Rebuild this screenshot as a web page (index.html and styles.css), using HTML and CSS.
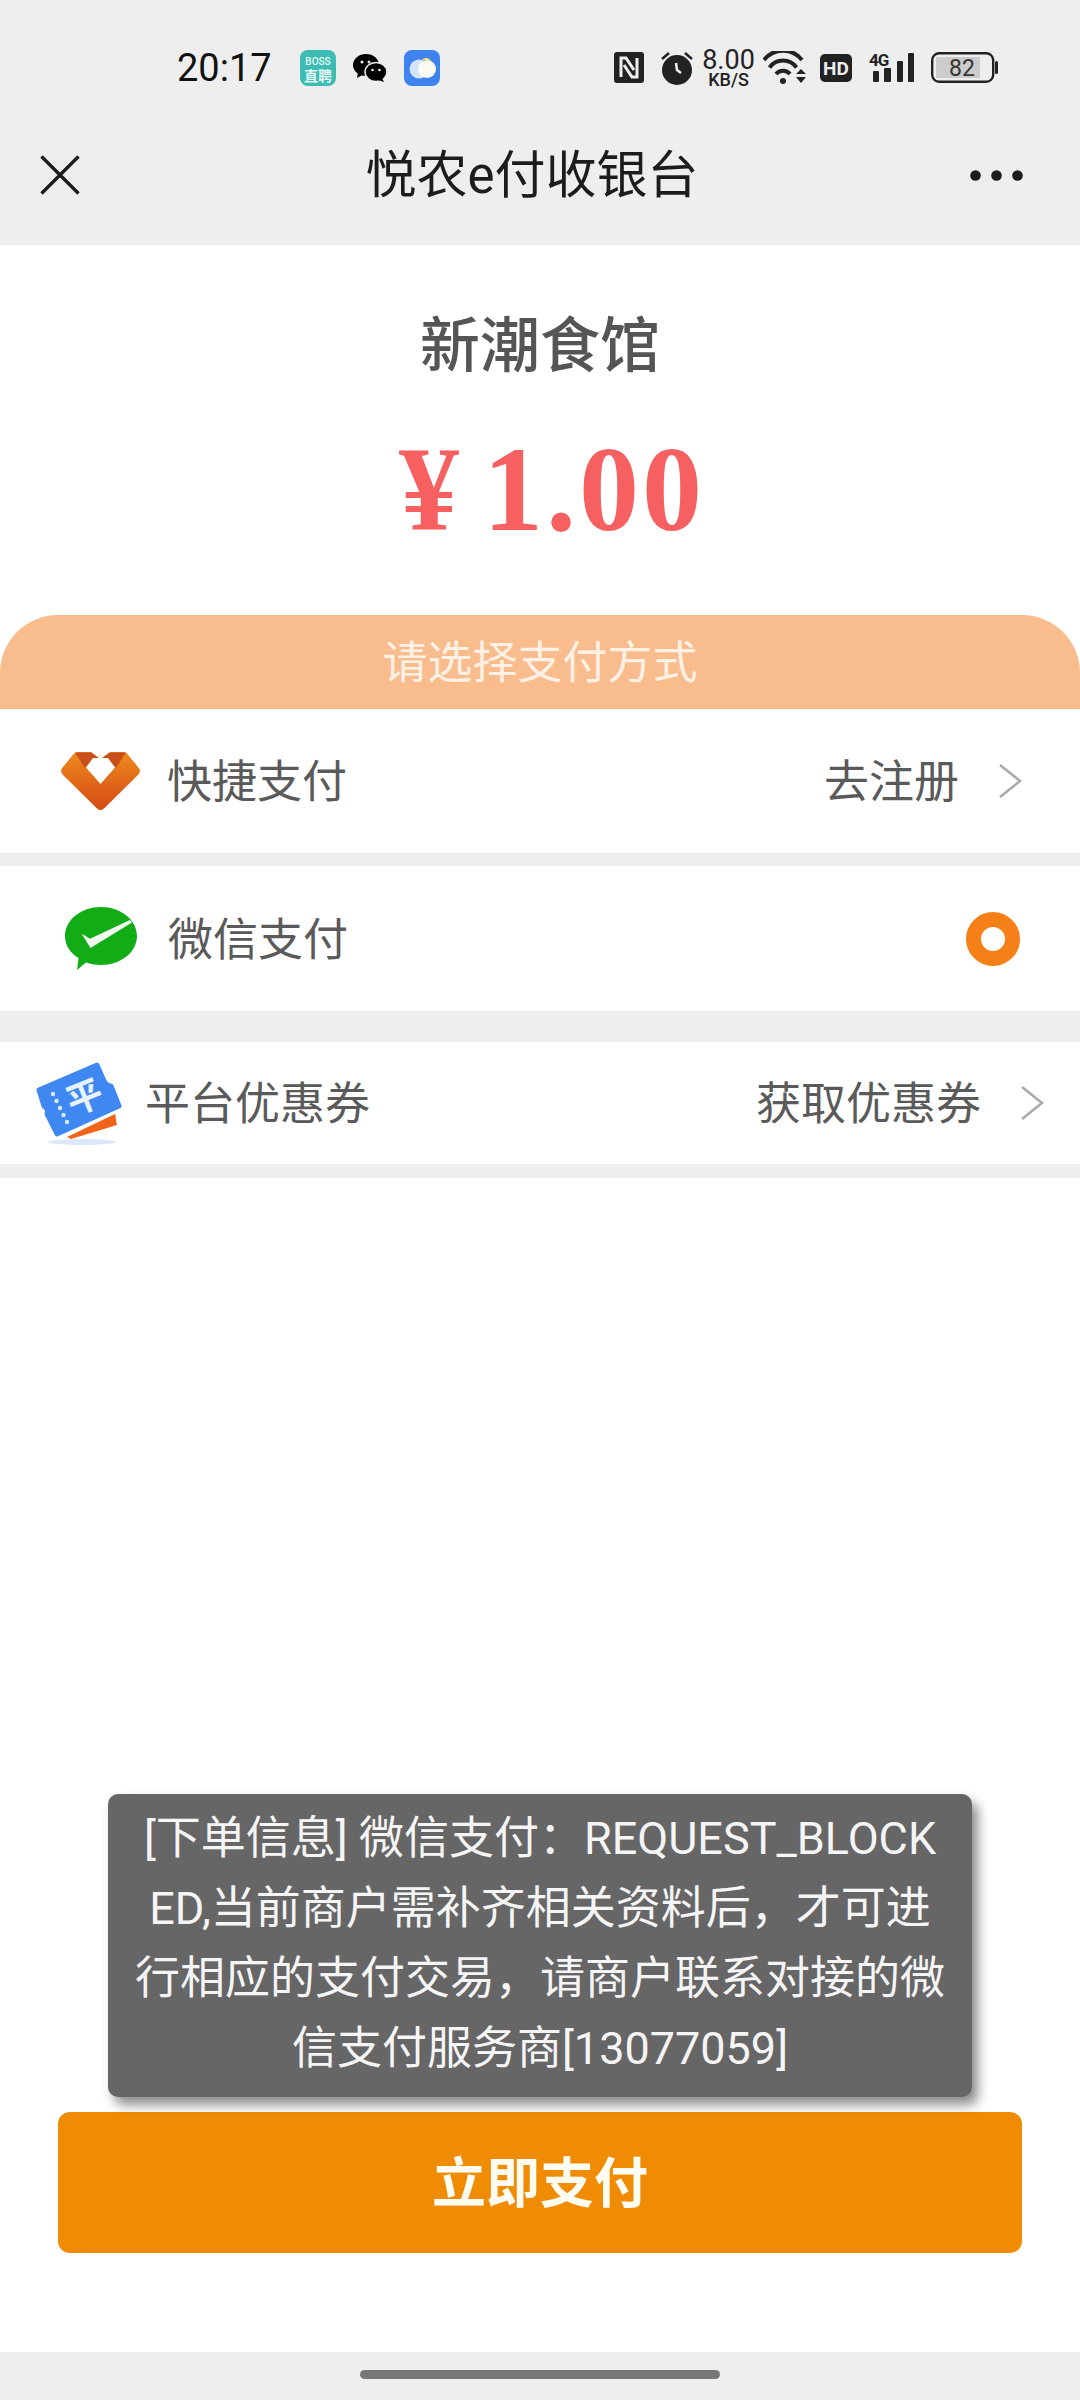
FILE: index.html
```html
<!DOCTYPE html>
<html lang="zh">
<head>
<meta charset="utf-8">
<title>悦农e付收银台</title>
<link rel="stylesheet" href="styles.css">
</head>
<body>
<div class="page">
  <header class="top">
    <div class="status">
      <span class="time">20:17</span>
      <svg class="ic-boss" viewBox="0 0 36 36"><rect width="36" height="36" rx="8" fill="#3dbcb3"/><text x="18" y="15" class="boss-a">BOSS</text><text x="18" y="31" class="boss-b">直聘</text></svg>
      <svg class="ic-wx" viewBox="0 0 34 28"><ellipse cx="13" cy="11" rx="13" ry="11"/><path d="M5 18l-1 6 7-4z"/><ellipse cx="23" cy="18" rx="11" ry="9.5" stroke="#eee" stroke-width="1.5"/><path d="M29 24l2 4-6-2z"/><circle cx="9" cy="8" r="1.5" fill="#eee"/><circle cx="16" cy="8" r="1.5" fill="#eee"/><circle cx="19.500" cy="16" r="1.300" fill="#eee"/><circle cx="26.500" cy="16" r="1.300" fill="#eee"/></svg>
      <svg class="ic-weather" viewBox="0 0 36 36"><rect width="36" height="36" rx="8" fill="#3f83f0"/><circle cx="15" cy="19" r="9.500" fill="#d5e3fb"/><circle cx="23" cy="19" r="9" fill="#fbfbf4"/><path d="M19 10a5 5 0 0 1 7 1" stroke="#ece06a" stroke-width="2" fill="none"/></svg>
      <span class="status-fill"></span>
      <svg class="ic-nfc" viewBox="0 0 30 31"><rect width="30" height="31" rx="3" fill="#222"/><path d="M7 25V6h5l8 12M23 6v19h-5L10 13" stroke="#eee" stroke-width="3" fill="none"/></svg>
      <svg class="ic-alarm" viewBox="0 0 32 34"><circle cx="16" cy="19" r="15" fill="#222"/><path d="M1 8l7-6M31 8l-7-6" stroke="#222" stroke-width="2.500"/><path d="M15 12l1 7 4 3" stroke="#eee" stroke-width="2.500" fill="none"/></svg>
      <span class="speed"><span class="speed-num">8.00</span><span class="speed-unit">KB/S</span></span>
      <svg class="ic-wifi" viewBox="0 0 45 33"><path d="M1 9a24 24 0 0 1 38 0M6.500 16.500a16.500 16.500 0 0 1 27 0M13 23a9 9 0 0 1 14 0" stroke="#222" stroke-width="4" fill="none"/><circle cx="20" cy="30" r="3" fill="#222"/><path d="M33 23l5-5 5 5zM33 26l5 6 5-6z" fill="#222"/></svg>
      <svg class="ic-hd" viewBox="0 0 32 28"><rect width="32" height="28" rx="5" fill="#222"/><text x="16" y="21" class="hd-t">HD</text></svg>
      <svg class="ic-signal" viewBox="0 0 46 33"><text x="0" y="15" class="sig-t">4G</text><rect x="4" y="20" width="6" height="11" rx="1" fill="#222"/><rect x="15" y="17" width="7" height="14" rx="1" fill="#222"/><rect x="28" y="10" width="6" height="21" rx="1" fill="#222"/><rect x="39" y="2" width="6" height="29" rx="1" fill="#222"/></svg>
      <svg class="ic-batt" viewBox="0 0 67 31"><rect x="1.200" y="1.200" width="61" height="28.600" rx="7" fill="none" stroke="#222" stroke-width="2.400"/><rect x="5" y="5" width="44" height="21" fill="#ccc"/><rect x="64" y="9" width="3" height="13" rx="1.500" fill="#222"/><text x="31" y="24" class="batt-t">82</text></svg>
    </div>
    <nav class="nav">
      <svg class="ic-close" viewBox="0 0 40 40"><path d="M1.500 1.500l37 37M38.500 1.500l-37 37" stroke="#1c1c1c" stroke-width="3.400" fill="none"/></svg>
      <h1 class="title">悦农e付收银台</h1>
      <svg class="ic-more" viewBox="0 0 53 11"><circle cx="5.500" cy="5.500" r="5.300"/><circle cx="26.500" cy="5.500" r="5.300"/><circle cx="47.500" cy="5.500" r="5.300"/></svg>
    </nav>
  </header>

  <main class="main">
    <section class="shop">
      <div class="shop-name">新潮食馆</div>
      <div class="amount">¥ 1.00</div>
    </section>
    <div class="banner">请选择支付方式</div>

    <div class="row row-a">
      <svg class="logo-bank" viewBox="0 0 81 60">
        <defs>
          <linearGradient id="bk" x1="0" y1="0" x2="0" y2="1"><stop offset="0" stop-color="#ee8a1d"/><stop offset="1" stop-color="#d44a16"/></linearGradient>
        </defs>
        <path d="M3 16L14 2.500Q15.500 1 18 1H31L40.500 8 50 1H63Q65.500 1 67 2.500L78 16Q82 20 78 24L44 57.500Q40.500 60.500 37 57.500L3 24Q-1 20 3 16Z" fill="url(#bk)"/>
        <path d="M15 1.500H31L40 8 33 8 25 17ZM66 1.500H50L41 8 48 8 56 17Z" fill="#c9501a"/>
        <path d="M33 7H48L55 16.500 40.500 33 26 16.500Z" fill="#fff"/>
      </svg>
      <span class="row-text">快捷支付</span>
      <span class="row-side">去注册</span>
      <svg class="chev" viewBox="0 0 23 34"><path d="M1 1l20 16L1 33" fill="none" stroke="#aaa" stroke-width="2.600"/></svg>
    </div>
    <div class="gap-t"></div>

    <div class="row row-b">
      <svg class="logo-wxpay" viewBox="0 0 72 63"><path d="M36 0C56 0 72 13 72 29S56 58 36 58C30 58 25 57 21 55.500L12 63 13.500 51C5 46 0 38 0 29 0 13 16 0 36 0Z" fill="#12ac17"/><path d="M16.500 26.500L25 31.700 65 13 67 15.500 25.500 41Z" fill="#f0faf0"/></svg>
      <span class="row-text">微信支付</span>
      <span class="radio"></span>
    </div>
    <div class="gap-l"></div>

    <div class="row row-c">
      <svg class="logo-coupon" viewBox="0 0 87 83">
        <ellipse cx="47" cy="80" rx="34" ry="3" fill="#dbe7fb"/>
        <path d="M32 75L80 52 82 63 36 77Z" fill="#f2631b"/>
        <path d="M4 28L62 3 69 19Q72 24 76 24L84 44 22 72 12 52Q14 47 9 44Z" fill="#3f88f2" stroke="#3f88f2" stroke-width="5" stroke-linejoin="round"/>
        <g fill="#d9e8fd"><circle cx="18" cy="32" r="2.200"/><circle cx="21.500" cy="39" r="2.200"/><circle cx="25" cy="46" r="2.200"/><circle cx="28.500" cy="53" r="2.200"/><circle cx="32" cy="60" r="2.200"/></g>
        <text x="50" y="48" class="coupon-t" transform="rotate(-22 50 36)">平</text>
      </svg>
      <span class="row-text">平台优惠券</span>
      <span class="row-side">获取优惠券</span>
      <svg class="chev" viewBox="0 0 23 34"><path d="M1 1l20 16L1 33" fill="none" stroke="#aaa" stroke-width="2.600"/></svg>
    </div>
    <div class="gap-s"></div>

    <div class="spacer"></div>
    <button class="pay">立即支付</button>
  </main>

  <div class="home"><span class="home-bar"></span></div>

  <div class="toast">[下单信息] 微信支付：REQUEST_BLOCK<br>ED,当前商户需补齐相关资料后，才可进<br>行相应的支付交易，请商户联系对接的微<br>信支付服务商[13077059]</div>
</div>
</body>
</html>
```

FILE: styles.css
```css
* { box-sizing: border-box; margin: 0; padding: 0; }
html, body { width: 1080px; height: 2400px; overflow: hidden; background: #fff; }
body { font-family: "Roboto", "Noto Sans CJK SC", sans-serif; color: #555; }

.page { position: relative; width: 1080px; height: 2400px; display: flex; flex-direction: column; }

.top { background: #eee; height: 245px; flex: none; }
.status { height: 115px; padding: 20px 82px 0 177px; display: flex; align-items: center; }
.status-fill { flex: 1; }
.time { width: 123px; font-size: 38px; color: #111; line-height: 1; }
.ic-boss { width: 36px; height: 36px; }
.ic-wx { width: 34px; height: 28px; margin-left: 17px; fill: #000; }
.ic-weather { width: 36px; height: 36px; margin-left: 17px; }
.ic-nfc { width: 30px; height: 31px; }
.ic-alarm { width: 32px; height: 34px; margin-left: 17px; }
.speed { width: 51px; margin-left: 10px; display: flex; flex-direction: column; align-items: center; color: #222; font-family: "Roboto", sans-serif; }
.speed-num { font-size: 27px; line-height: 23px; font-weight: 400; }
.speed-unit { font-size: 18px; line-height: 15px; font-weight: 500; }
.ic-wifi { width: 45px; height: 33px; margin-left: 9px; }
.ic-hd { width: 32px; height: 28px; margin-left: 12px; }
.ic-signal { width: 46px; height: 33px; margin-left: 17px; }
.ic-batt { width: 67px; height: 31px; margin-left: 16px; }
.boss-a { font: 500 10px "Roboto", sans-serif; fill: #e6f8f6; text-anchor: middle; }
.boss-b { font: 700 14px "Noto Sans CJK SC", sans-serif; fill: #e6f8f6; text-anchor: middle; }
.hd-t { font: 700 19px "Roboto", sans-serif; fill: #eee; text-anchor: middle; }
.sig-t { font: 700 17px "Roboto", sans-serif; fill: #222; letter-spacing: -1px; }
.batt-t { font: 400 23px "Roboto", sans-serif; fill: #333; text-anchor: middle; }

.nav { height: 130px; padding: 0 57px 10px 40px; display: flex; align-items: center; }
.ic-close { width: 40px; height: 40px; flex: none; }
.ic-more { width: 53px; height: 11px; flex: none; fill: #1c1c1c; }
.title { flex: 1; padding-left: 14px; text-align: center; font-size: 51px; font-weight: 400; color: #1c1c1c; line-height: 1; }

.main { flex: 1; display: flex; flex-direction: column; min-height: 0; }
.shop { height: 370px; flex: none; display: flex; flex-direction: column; align-items: center; padding-top: 67px; }
.shop-name { font-size: 60px; font-weight: 500; line-height: 70px; color: #555; }
.amount { margin-top: 53px; padding-left: 24px; font-family: "Liberation Serif", serif; font-size: 120px; font-weight: 700; line-height: 110px; letter-spacing: 3px; word-spacing: -12px; color: #f76060; white-space: pre; }

.banner { height: 94px; flex: none; background: #f9bc8d; border-radius: 58px 58px 0 0; color: #fdf1e6; font-size: 45px; line-height: 98px; text-align: center; }

.row { flex: none; display: flex; align-items: center; background: #fff; font-size: 45px; color: #5a5a5a; }
.row-a { height: 144px; padding: 0 58px 0 60px; }
.row-b { height: 145px; padding: 0 60px 0 65px; }
.row-c { height: 122px; padding: 0 36px 0 35px; }
.row-text { flex: 1; line-height: 1; padding-top: 3px; }
.row-side { line-height: 1; margin-right: 40px; padding-top: 3px; }
.gap-t { height: 13px; background: #eee; flex: none; }
.gap-s { height: 14px; background: #eee; flex: none; }
.gap-l { height: 31px; background: #eee; flex: none; }

.logo-bank { width: 81px; height: 60px; margin-right: 26px; flex: none; }
.logo-wxpay { width: 72px; height: 63px; margin-right: 31px; flex: none; }
.logo-coupon { width: 87px; height: 83px; margin-right: 23px; flex: none; }
.coupon-t { font: 700 36px "Noto Sans CJK SC", sans-serif; fill: #e8f1fe; text-anchor: middle; }
.chev { width: 23px; height: 34px; flex: none; }
.radio { width: 54px; height: 54px; border-radius: 50%; border: 15px solid #f58018; background: #fff; flex: none; }

.spacer { flex: 1; }
.pay { height: 141px; margin: 0 58px 99px; padding-bottom: 6px; flex: none; border: 0; border-radius: 12px; background: #f08c04; color: #fffdf2; font-family: "Noto Sans CJK SC", sans-serif; font-size: 54px; font-weight: 700; }

.home { height: 48px; flex: none; background: #eee; display: flex; justify-content: center; padding-top: 18px; }
.home-bar { width: 360px; height: 9px; border-radius: 5px; background: #777; }

.toast { position: absolute; left: 108px; top: 1794px; width: 864px; height: 303px; padding-top: 10px; border-radius: 10px; background: #666; box-shadow: 6px 8px 12px rgba(0,0,0,.45); color: #f5f5f5; font-size: 45px; line-height: 70px; text-align: center; white-space: nowrap; }
```
